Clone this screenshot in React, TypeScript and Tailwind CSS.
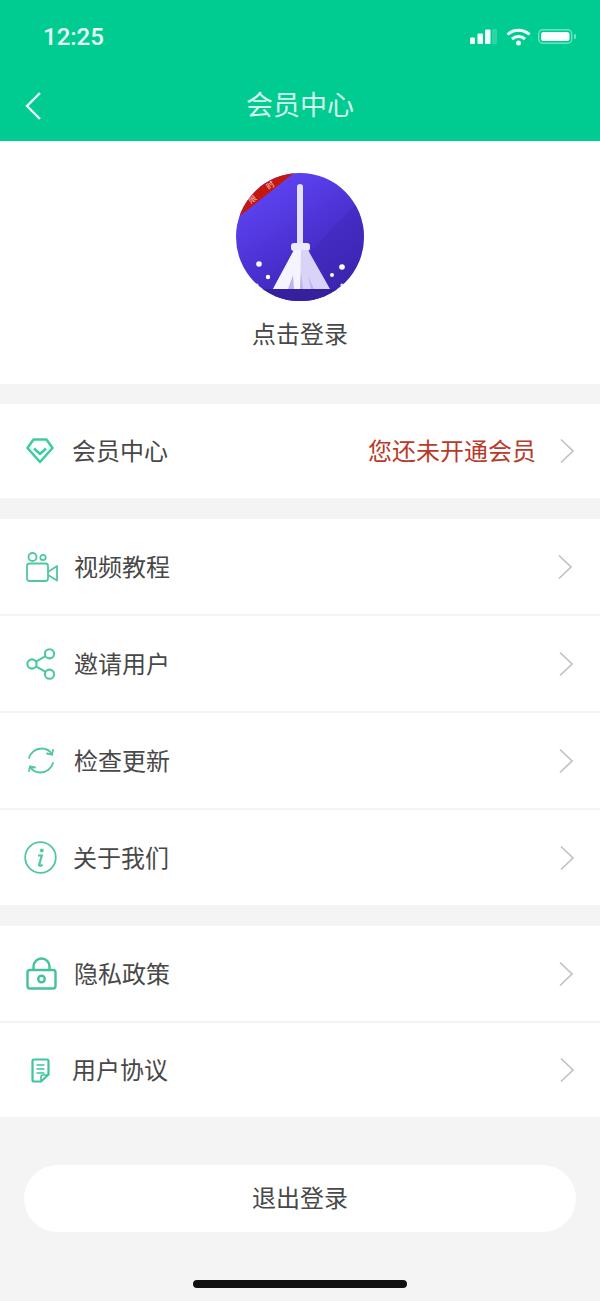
import type { ReactNode } from "react"

type Row = {
  label: string
  icon: ReactNode
  iconBox: string
  arrow: string
  height: string
  note?: string
}

const Chevron = () => (
  <svg width="18" height="26" viewBox="0 0 18 26" fill="none" stroke="#c2c2c2" strokeWidth="1.700">
    <path d="M3 1.500l12 11.500L3 24.500" />
  </svg>
)

const green = "#4fc8a2"

const Diamond = () => (
  <svg width="28" height="26" viewBox="0 0 28 26" fill="none" stroke="#3fcca2" strokeWidth="2.600" strokeLinejoin="round">
    <path d="M7.500 1.500h13l6 8.500L14 24 1.500 10z" />
    <path d="M8 10.500l6 5.500 6-5.500" />
  </svg>
)

const Video = () => (
  <svg width="32" height="30" viewBox="0 0 32 30" fill="none" stroke={green} strokeWidth="1.800" strokeLinejoin="round">
    <circle cx="6.500" cy="5" r="4" />
    <circle cx="17" cy="5.500" r="2.700" />
    <rect x="1" y="11.500" width="21" height="17.500" rx="2.500" />
    <path d="M22 20l9-6v14.500L22 23" />
  </svg>
)

const Share = () => (
  <svg width="30" height="32" viewBox="0 0 30 32" fill="none" stroke={green} strokeWidth="2.100">
    <circle cx="6" cy="16" r="4.600" />
    <circle cx="23.500" cy="5.800" r="4.600" />
    <circle cx="23.500" cy="26.200" r="4.600" />
    <path d="M10 13.700l9.500-5.500M10 18.300l9.500 5.500" />
  </svg>
)

const Refresh = () => (
  <svg width="28" height="27" viewBox="0 0 28 27" fill="none" stroke={green} strokeWidth="1.800" strokeLinecap="round" strokeLinejoin="round">
    <path d="M2 11C3.500 5.500 8.500 1.500 14.500 1.500c4.500 0 8.500 2.200 10.500 6" />
    <path d="M26 16c-1.500 5.500-6.500 9.500-12.500 9.500-4.500 0-8.500-2.200-10.500-6" />
    <path d="M26 3l-1 4.700-5-1.200" />
    <path d="M2 24l1-4.500 5 1" />
  </svg>
)

const Info = () => (
  <svg width="33" height="33" viewBox="0 0 33 33" fill="none">
    <circle cx="16.500" cy="16.500" r="15.300" stroke={green} strokeWidth="1.800" />
    <circle cx="17.800" cy="9.500" r="1.900" fill={green} />
    <path d="M14 14.500h3.800L15.200 23.500c-.4 1.500.8 1.800 3.300.2" stroke={green} strokeWidth="2.200" fill="none" />
  </svg>
)

const Lock = () => (
  <svg width="31" height="33" viewBox="0 0 31 33" fill="none" stroke="#45c29c" strokeWidth="2.400">
    <rect x="1.500" y="13" width="28" height="18.500" rx="2.500" />
    <path d="M7.500 13V9.500a8 8 0 0 1 16 0V13" />
    <circle cx="15.500" cy="22" r="3.300" />
  </svg>
)

const Doc = () => (
  <svg width="19" height="25" viewBox="0 0 19 25" fill="none" stroke="#3fc49c" strokeWidth="2.200" strokeLinejoin="round">
    <path d="M3 1.500h13a1.500 1.500 0 0 1 1.500 1.500v13.500L10 23.500H3A1.500 1.500 0 0 1 1.500 22V3A1.500 1.500 0 0 1 3 1.500z" />
    <path d="M5.500 7h8M5.500 11h8M5.500 15h8" strokeWidth="1.700" />
    <path d="M17.500 17H12a2 2 0 0 0-2 2v4.500" strokeWidth="1.600" />
  </svg>
)

const member: Row = { label: "会员中心", icon: <Diamond />, iconBox: "w-[72px] pl-[26px]", arrow: "pr-[24px]", height: "h-[94px]", note: "您还未开通会员" }

const groupOne: Row[] = [
  { label: "视频教程", icon: <Video />, iconBox: "w-[74px] pl-[26px]", arrow: "pr-[26px]", height: "h-[95px]" },
  { label: "邀请用户", icon: <Share />, iconBox: "w-[74px] pl-[26px]", arrow: "pr-[25px]", height: "h-[95px]" },
  { label: "检查更新", icon: <Refresh />, iconBox: "w-[74px] pl-[27px]", arrow: "pr-[25px]", height: "h-[95px]" },
  { label: "关于我们", icon: <Info />, iconBox: "w-[73px] pl-[24px]", arrow: "pr-[24px]", height: "h-[95px]" },
]

const groupTwo: Row[] = [
  { label: "隐私政策", icon: <Lock />, iconBox: "w-[74px] pl-[26px]", arrow: "pr-[25px]", height: "h-[95px]" },
  { label: "用户协议", icon: <Doc />, iconBox: "w-[72px] pl-[31px]", arrow: "pr-[24px]", height: "h-[94px]" },
]

function MenuRow({ row }: { row: Row }) {
  return (
    <div className={`flex items-center bg-white ${row.height} ${row.arrow}`}>
      <div className={`flex shrink-0 items-center ${row.iconBox}`}>{row.icon}</div>
      <span className="mb-[2px] text-[24px] leading-none text-[#484848]">{row.label}</span>
      <div className="ml-auto flex items-center gap-[22px]">
        {row.note && <span className="mb-[2px] text-[24px] leading-none text-[#b83a2a]">{row.note}</span>}
        <Chevron />
      </div>
    </div>
  )
}

const Broom = () => (
  <svg width="128" height="128" viewBox="0 0 128 128">
    <defs>
      <clipPath id="disc">
        <circle cx="64" cy="64" r="64" />
      </clipPath>
      <linearGradient id="discFill" x1="0.150" y1="0.100" x2="0.700" y2="1">
        <stop offset="0" stopColor="#5f45f5" />
        <stop offset="0.550" stopColor="#4a30cf" />
        <stop offset="1" stopColor="#3a22a8" />
      </linearGradient>
    </defs>
    <g clipPath="url(#disc)">
      <rect width="128" height="128" fill="url(#discFill)" />
      <path d="M128 22L28 128h100z" fill="#3f27b8" fillOpacity="0.450" />
      <path d="M0 116h128v12H0z" fill="#36209e" />
      <path d="M0 46L58 0H0z" fill="#c4170f" />
      <text x="0" y="0" transform="translate(15 31) rotate(-38)" fontSize="8" fill="#f7c9c5">限</text>
      <text x="0" y="0" transform="translate(33 17) rotate(-38)" fontSize="8" fill="#f7c9c5">时</text>
      <circle cx="23" cy="91" r="2.800" fill="#fff" />
      <circle cx="32" cy="104" r="2.200" fill="#fff" />
      <circle cx="106" cy="94" r="2.800" fill="#fff" />
      <circle cx="96" cy="102" r="2" fill="#fff" />
      <circle cx="106" cy="112" r="1.600" fill="#fff" />
      <circle cx="21" cy="112" r="1.600" fill="#fff" />
      <rect x="61" y="11" width="6" height="62" rx="3" fill="#e4e0fb" />
      <rect x="55" y="70" width="19" height="8" rx="3" fill="#ece9fc" />
      <path d="M58 77h14l22 39H37z" fill="#d9d4f7" />
      <path d="M58 77h7l-1 39H37z" fill="#f6f4ff" />
      <path d="M52 116l5-14 1 14zM64 116l1-17 2 17zM75 116l-3-13 6 13z" fill="#bdb4ef" />
    </g>
  </svg>
)

const StatusBar = () => (
  <div className="flex h-[73px] items-center justify-between pl-[43px] pr-[23px]">
    <span className="text-[24px] font-medium leading-none text-[#e8fbf4] [font-family:Roboto,sans-serif]">12:25</span>
    <div className="flex items-center">
      <svg width="27" height="15" viewBox="0 0 27 15" fill="#f1fffa">
        <rect x="0" y="8.500" width="5" height="6.500" rx="1" />
        <rect x="7.500" y="4.500" width="5.500" height="10.500" rx="1" />
        <rect x="15" y="0.500" width="5.500" height="14.500" rx="1" />
        <rect x="22" y="0" width="5" height="15" rx="1" opacity="0.180" />
      </svg>
      <svg className="ml-[9px]" width="25" height="18" viewBox="0 0 25 18" fill="none" stroke="#f1fffa" strokeWidth="3">
        <path d="M1.500 6.500c6.200-5.600 15.800-5.600 22 0" />
        <path d="M6 11c3.800-3.300 9.200-3.300 13 0" />
        <circle cx="12.500" cy="15" r="2.500" fill="#f1fffa" stroke="none" />
      </svg>
      <svg className="ml-[7px]" width="39" height="15" viewBox="0 0 39 15" fill="none">
        <rect x="0.700" y="0.700" width="33" height="13.600" rx="4" stroke="#f1fffa" strokeOpacity="0.450" strokeWidth="1.400" />
        <rect x="3" y="3" width="28.500" height="9" rx="2.500" fill="#f8fffc" />
        <rect x="36" y="5" width="2" height="5" rx="1" fill="#f1fffa" fillOpacity="0.450" />
      </svg>
    </div>
  </div>
)

export default function App() {
  return (
    <div className="flex h-[1301px] w-[600px] flex-col overflow-hidden bg-[#f4f4f4] [font-family:'Noto_Sans_CJK_SC','Noto_Sans',sans-serif]">
      <header className="h-[141px] bg-[#00cc92]">
        <StatusBar />
        <div className="relative flex h-[68px] items-center justify-center pb-[7px]">
          <svg className="absolute left-[23px] top-[18px]" width="20" height="30" viewBox="0 0 20 30" fill="none" stroke="#eefcf7" strokeWidth="2.400">
            <path d="M17 2L4 15l13 13" />
          </svg>
          <span className="text-[27px] leading-none text-[#d6f7eb]">会员中心</span>
        </div>
      </header>

      <section className="flex h-[243px] flex-col items-center bg-white pt-[32px]">
        <Broom />
        <span className="mt-[20px] text-[24px] leading-none text-[#484848]">点击登录</span>
      </section>

      <div className="mt-[20px]">
        <MenuRow row={member} />
      </div>

      <div className="mt-[21px] flex flex-col gap-[2px]">
        {groupOne.map((row) => (
          <MenuRow key={row.label} row={row} />
        ))}
      </div>

      <div className="mt-[21px] flex flex-col gap-[2px]">
        {groupTwo.map((row) => (
          <MenuRow key={row.label} row={row} />
        ))}
      </div>

      <button className="mx-[24px] mt-[48px] flex h-[67px] items-center justify-center rounded-full bg-white pb-[3px] text-[24px] leading-none text-[#484848]">
        退出登录
      </button>

      <div className="mx-auto mt-[48px] h-[8px] w-[214px] rounded-full bg-[#111111]" />
    </div>
  )
}
